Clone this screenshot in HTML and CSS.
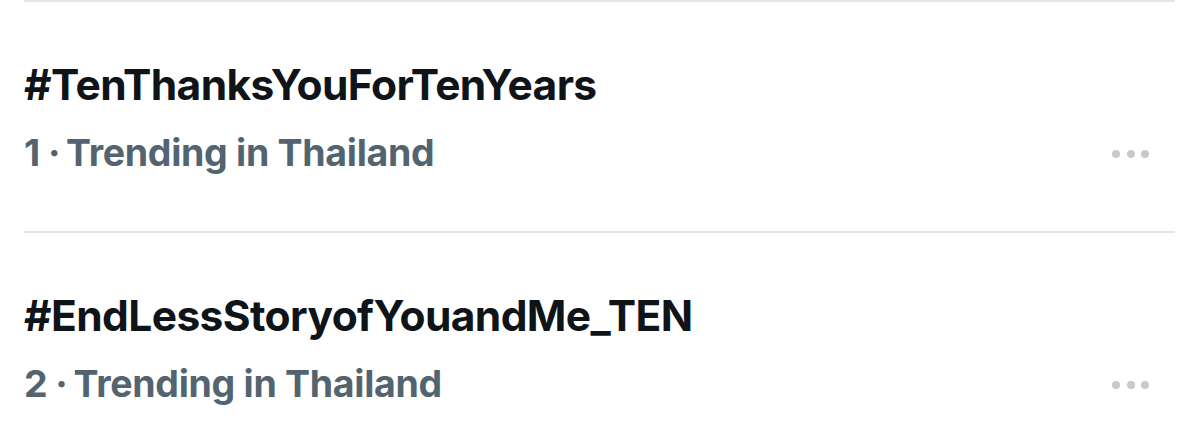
FILE: index.html
```html
<!DOCTYPE html>
<html>
<head>
<meta charset="utf-8">
<link rel="stylesheet" href="styles.css">
</head>
<body>
<div class="list">
  <div class="trend">
    <div class="text">
      <div class="tag">#TenThanksYouForTenYears</div>
      <div class="meta">1<span class="sep">·</span>Trending in Thailand</div>
    </div>
    <div class="more"><span></span><span></span><span></span></div>
  </div>
  <div class="trend">
    <div class="text">
      <div class="tag">#EndLessStoryofYouandMe_TEN</div>
      <div class="meta">2<span class="sep">·</span>Trending in Thailand</div>
    </div>
    <div class="more"><span></span><span></span><span></span></div>
  </div>
</div>
</body>
</html>
```
FILE: styles.css
```css
html, body {
  margin: 0;
  padding: 0;
  background: #ffffff;
}
.list {
  padding: 0 24px;
  font-family: Inter, "Noto Sans", sans-serif;
}
.trend {
  border-top: 2px solid #e3e5e8;
  height: 229px;
  display: flex;
  align-items: flex-start;
  justify-content: space-between;
}
.text {
  padding-top: 59px;
  display: flex;
  flex-direction: column;
}
.tag {
  font-size: 42.5px;
  font-weight: 700;
  color: #0f1419;
  line-height: 48px;
  letter-spacing: -0.6px;
}
.meta {
  margin-top: 22px;
  font-size: 37.5px;
  font-weight: 700;
  color: #536471;
  line-height: 44px;
  letter-spacing: -0.3px;
}
.sep {
  margin: 0 6px 0 8px;
}
.more {
  display: flex;
  gap: 6.5px;
  margin-top: 148px;
  margin-right: 26px;
}
.more span {
  width: 8px;
  height: 8px;
  border-radius: 50%;
  background: #c5cad0;
}
```
